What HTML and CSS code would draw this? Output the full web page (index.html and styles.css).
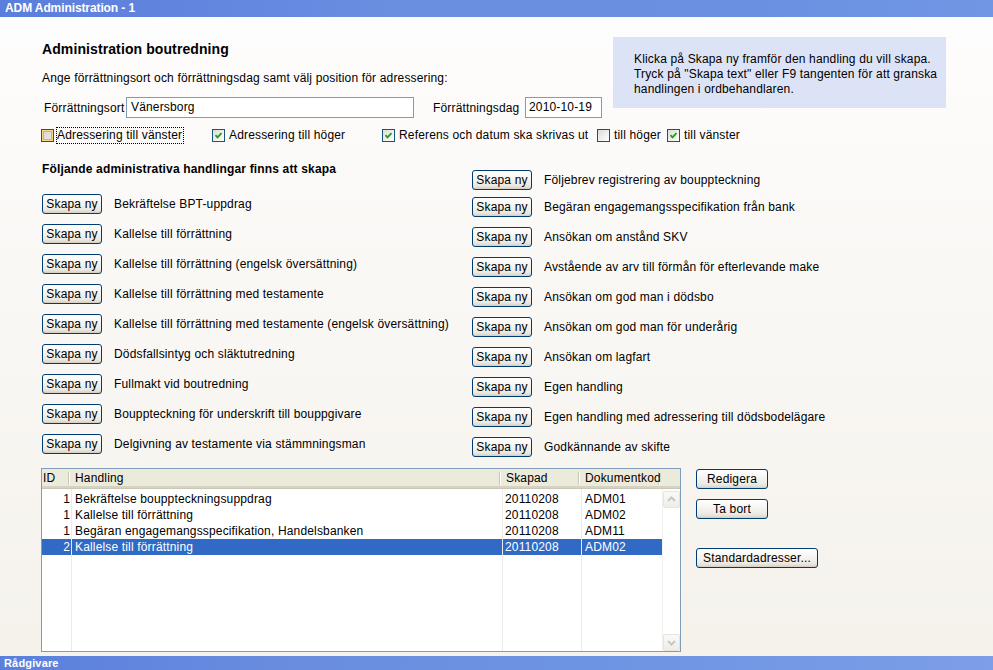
FILE: index.html
```html
<!DOCTYPE html>
<html lang="sv">
<head>
<meta charset="utf-8">
<title>ADM Administration - 1</title>
<link rel="stylesheet" href="styles.css">
</head>
<body>
<div class="window">
  <div class="titlebar">ADM Administration - 1</div>
  <div class="content">
    <div class="top">
      <div class="form">
        <h1>Administration boutredning</h1>
        <p class="desc">Ange förrättningsort och förrättningsdag samt välj position för adressering:</p>
        <div class="fields">
          <span class="lbl lbl-ort">Förrättningsort</span>
          <span class="input input-ort">Vänersborg</span>
          <span class="lbl lbl-dag">Förrättningsdag</span>
          <span class="input input-dag">2010-10-19</span>
        </div>
      </div>
      <div class="info">Klicka på Skapa ny framför den handling du vill skapa.<br>Tryck på "Skapa text" eller F9 tangenten för att granska<br>handlingen i ordbehandlaren.</div>
    </div>

    <div class="checks">
      <label class="chk w1"><span class="cb hover"></span><span class="focus">Adressering till vänster</span></label>
      <label class="chk w2"><span class="cb"><svg viewBox="0 0 11 11"><polyline points="2.5,5.2 4.5,7.3 8.5,3.2"/></svg></span><span>Adressering till höger</span></label>
      <label class="chk w3"><span class="cb"><svg viewBox="0 0 11 11"><polyline points="2.5,5.2 4.5,7.3 8.5,3.2"/></svg></span><span>Referens och datum ska skrivas ut</span></label>
      <label class="chk w4"><span class="cb"></span><span>till höger</span></label>
      <label class="chk w5"><span class="cb"><svg viewBox="0 0 11 11"><polyline points="2.5,5.2 4.5,7.3 8.5,3.2"/></svg></span><span>till vänster</span></label>
    </div>

    <div class="docs">
      <div class="col col-left">
        <h2>Följande administrativa handlingar finns att skapa</h2>
        <div class="doc"><button class="btn skapa">Skapa ny</button><span>Bekräftelse BPT-uppdrag</span></div>
        <div class="doc"><button class="btn skapa">Skapa ny</button><span>Kallelse till förrättning</span></div>
        <div class="doc"><button class="btn skapa">Skapa ny</button><span>Kallelse till förrättning (engelsk översättning)</span></div>
        <div class="doc"><button class="btn skapa">Skapa ny</button><span>Kallelse till förrättning med testamente</span></div>
        <div class="doc"><button class="btn skapa">Skapa ny</button><span>Kallelse till förrättning med testamente (engelsk översättning)</span></div>
        <div class="doc"><button class="btn skapa">Skapa ny</button><span>Dödsfallsintyg och släktutredning</span></div>
        <div class="doc"><button class="btn skapa">Skapa ny</button><span>Fullmakt vid boutredning</span></div>
        <div class="doc"><button class="btn skapa">Skapa ny</button><span>Bouppteckning för underskrift till bouppgivare</span></div>
        <div class="doc"><button class="btn skapa">Skapa ny</button><span>Delgivning av testamente via stämmningsman</span></div>
      </div>
      <div class="col col-right">
        <div class="doc short"><button class="btn skapa">Skapa ny</button><span>Följebrev registrering av bouppteckning</span></div>
        <div class="doc"><button class="btn skapa">Skapa ny</button><span>Begäran engagemangsspecifikation från bank</span></div>
        <div class="doc"><button class="btn skapa">Skapa ny</button><span>Ansökan om anstånd SKV</span></div>
        <div class="doc"><button class="btn skapa">Skapa ny</button><span>Avstående av arv till förmån för efterlevande make</span></div>
        <div class="doc"><button class="btn skapa">Skapa ny</button><span>Ansökan om god man i dödsbo</span></div>
        <div class="doc"><button class="btn skapa">Skapa ny</button><span>Ansökan om god man för underårig</span></div>
        <div class="doc"><button class="btn skapa">Skapa ny</button><span>Ansökan om lagfart</span></div>
        <div class="doc"><button class="btn skapa">Skapa ny</button><span>Egen handling</span></div>
        <div class="doc"><button class="btn skapa">Skapa ny</button><span>Egen handling med adressering till dödsbodelägare</span></div>
        <div class="doc"><button class="btn skapa">Skapa ny</button><span>Godkännande av skifte</span></div>
      </div>
    </div>

    <div class="lower">
      <div class="list">
        <div class="lhead">
          <div class="hc c-id">ID</div>
          <div class="hc c-hand">Handling</div>
          <div class="hc c-skap">Skapad</div>
          <div class="hc c-dok">Dokumentkod</div>
          <div class="hc c-fill"></div>
        </div>
        <div class="lbody">
          <div class="bc c-id">
            <div class="cell">1</div><div class="cell">1</div><div class="cell">1</div><div class="cell sel">2</div>
          </div>
          <div class="bc c-hand">
            <div class="cell">Bekräftelse bouppteckningsuppdrag</div>
            <div class="cell">Kallelse till förrättning</div>
            <div class="cell">Begäran engagemangsspecifikation, Handelsbanken</div>
            <div class="cell sel">Kallelse till förrättning</div>
          </div>
          <div class="bc c-skap">
            <div class="cell">20110208</div><div class="cell">20110208</div><div class="cell">20110208</div><div class="cell sel">20110208</div>
          </div>
          <div class="bc c-dok">
            <div class="cell">ADM01</div><div class="cell">ADM02</div><div class="cell">ADM11</div><div class="cell sel">ADM02</div>
          </div>
          <div class="scroll">
            <span class="arrow"><svg viewBox="0 0 15 15"><polyline points="4,9 7.5,5.5 11,9"/></svg></span>
            <span class="arrow"><svg viewBox="0 0 15 15"><polyline points="4,6 7.5,9.5 11,6"/></svg></span>
          </div>
        </div>
      </div>
      <div class="actions">
        <button class="btn act">Redigera</button>
        <button class="btn act tabort">Ta bort</button>
        <button class="btn std">Standardadresser...</button>
      </div>
    </div>
  </div>
  <div class="statusbar">Rådgivare</div>
</div>
</body>
</html>
```

FILE: styles.css
```css
* { box-sizing: border-box; }
html, body { margin: 0; padding: 0; }
body {
  width: 993px;
  height: 670px;
  overflow: hidden;
  font-family: "Liberation Sans", Arial, sans-serif;
  font-size: 12px;
  letter-spacing: 0.16px;
  color: #000;
}
.window { display: flex; flex-direction: column; height: 670px; }

.titlebar {
  height: 17px;
  flex: none;
  background: linear-gradient(90deg, #5a7edc 0%, #6a8ee0 40%, #6a90e2 75%, #7096e4 100%);
  color: #fff;
  font-weight: bold;
  font-size: 12px;
  letter-spacing: -0.1px;
  line-height: 17px;
  padding-left: 5px;
}

.content {
  flex: 1;
  background: linear-gradient(#fefdfd, #faf8f5 40%, #f5f2ec);
  padding: 0 0 4px 42px;
  display: flex;
  flex-direction: column;
}

.top { display: flex; align-items: flex-start; padding-top: 20px; }
.form { width: 560px; }
h1 { margin: 4px 0 0; font-size: 14px; letter-spacing: 0.1px; line-height: 16px; font-weight: bold; }
.desc { margin: 13px 0 0; line-height: 16px; }
.fields { margin-top: 11px; display: flex; align-items: center; height: 21px; }
.lbl { line-height: 16px; }
.lbl-ort { width: 84px; padding-left: 2px; }
.lbl-dag { width: 111px; padding-left: 19px; }
.input {
  height: 21px;
  border: 1px solid #7f9db9;
  background: #fff;
  line-height: 19px;
  padding-left: 4px;
}
.input-ort { width: 288px; }
.input-dag { width: 77px; padding-left: 3px; }

.info {
  margin-left: 11px;
  width: 333px;
  height: 71px;
  background: #dde3f6;
  padding: 15px 0 0 21px;
  line-height: 15px;
}

.checks { display: flex; margin-top: 9px; margin-left: -1px; height: 16px; align-items: center; }
.chk { display: flex; align-items: center; line-height: 15px; white-space: nowrap; }
.w1 { width: 171px; }
.w2 { width: 170px; }
.w3 { width: 215px; }
.w4 { width: 70px; }
.w5 { width: 80px; }
.cb {
  width: 13px;
  height: 13px;
  flex: none;
  border: 1px solid #1c5180;
  background: linear-gradient(135deg, #dcdcd6 0%, #f2f2ef 60%, #fff 100%);
  margin-right: 4px;
  display: flex;
}
.cb svg { width: 11px; height: 11px; }
.cb polyline { fill: none; stroke: #21a121; stroke-width: 1.9; }
.cb.hover {
  box-shadow: inset 0 0 0 1px #fcd687, inset 0 0 0 2px #f4ac3a;
  background: linear-gradient(135deg, #d5d4cf, #ebeae6);
}
.focus { outline: 1px dotted #000; outline-offset: 0; padding: 0 1px 0 0; margin-left: -1px; }

.btn {
  font-family: "Liberation Sans", Arial, sans-serif;
  font-size: 12px;
  letter-spacing: inherit;
  color: #000;
  height: 20px;
  padding: 0;
  border: 1px solid #003c74;
  border-radius: 3px;
  background: linear-gradient(#ffffff 0%, #f5f4f0 45%, #ebe9e2 80%, #d8d3c8 100%);
  box-shadow: inset 0 -1px 0 #d6d0c5;
  line-height: 17px;
}

.docs { display: flex; margin-top: 17px; height: 302px; }
.col { display: flex; flex-direction: column; }
.col-left { width: 430px; }
.col-right { padding-top: 5px; }
h2 { margin: 0; height: 29px; padding-top: 1px; font-size: 12px; line-height: 16px; font-weight: bold; }
.doc { height: 30px; display: flex; align-items: center; white-space: nowrap; }
.doc.short { height: 27px; align-items: flex-start; padding-top: 5px; }
.doc.short span { line-height: 20px; }
.skapa { width: 60px; margin-right: 12px; }

.lower { display: flex; margin-top: 6px; margin-left: -1px; }
.list {
  width: 640px;
  height: 184px;
  border: 1px solid #7f9db9;
  background: #fff;
  display: flex;
  flex-direction: column;
}
.lhead {
  display: flex;
  height: 20px;
  background: #ebeadb;
  border-bottom: 1px solid #cbc7b8;
  box-shadow: inset 0 -2px 0 #d6d2c2;
}
.hc {
  line-height: 18px;
  padding-left: 3px;
  background: linear-gradient(#cbc7b8, #cbc7b8) right 3px top 3px / 1px 13px no-repeat,
              linear-gradient(#fff, #fff) right 2px top 3px / 1px 13px no-repeat;
}
.hc.c-id { padding-left: 1px; }
.hc.c-fill { background: none; }
.c-id { width: 30px; }
.c-hand { width: 431px; }
.c-skap { width: 79px; }
.c-dok { width: 80px; }
.c-fill { width: 18px; }

.lbody { flex: 1; display: flex; }
.bc { padding-top: 2px; border-right: 1px solid #ebebeb; }
.bc.c-dok { border-right: none; }
.cell { height: 16px; line-height: 16px; padding-left: 3px; white-space: nowrap; }
.c-id .cell { text-align: right; padding-right: 1px; padding-left: 0; }
.c-skap .cell { padding-left: 2px; }
.cell.sel { background: #316ac5; color: #fff; }

.scroll {
  width: 18px;
  padding: 2px 1px 0 0;
  display: flex;
  flex-direction: column;
  justify-content: space-between;
  background: #fff;
  border-left: 1px solid #f0f0ec;
}
.arrow {
  width: 17px;
  height: 17px;
  border: 1px solid #e6e5de;
  border-radius: 2px;
  background: linear-gradient(#fafaf8, #eeede7);
  display: flex;
  align-items: center;
  justify-content: center;
}
.arrow svg { width: 15px; height: 15px; }
.arrow polyline { fill: none; stroke: #c9c8c0; stroke-width: 2; }

.actions { display: flex; flex-direction: column; align-items: flex-start; margin-left: 15px; }
.act { width: 72px; margin-top: 1px; }
.tabort { margin-top: 10px; }
.std { width: 122px; margin-top: 29px; }

.statusbar {
  height: 14px;
  flex: none;
  background: linear-gradient(90deg, #5b80dc 0%, #6a8ddf 30%, #6d94e2 60%, #7d9ee8 100%);
  color: #fff;
  font-weight: bold;
  font-size: 11px;
  line-height: 14px;
  padding: 0 0 0 4px;
  overflow: hidden;
}
```
